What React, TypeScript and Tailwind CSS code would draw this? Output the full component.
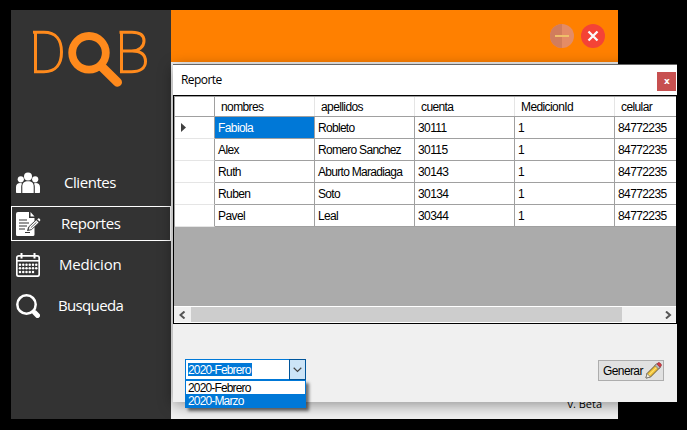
import React from 'react';

const columns = ['nombres', 'apellidos', 'cuenta', 'MedicionId', 'celular'];
const rows = [
  ['Fabiola', 'Robleto', '30111', '1', '84772235'],
  ['Alex', 'Romero Sanchez', '30115', '1', '84772235'],
  ['Ruth', 'Aburto Maradiaga', '30143', '1', '84772235'],
  ['Ruben', 'Soto', '30134', '1', '84772235'],
  ['Pavel', 'Leal', '30344', '1', '84772235'],
];

function Logo() {
  return (
    <svg className="ml-[21px] mt-[19px] block" width="118" height="60" viewBox="32 29 118 60" fill="none" stroke="#ff8a1c">
      <path d="M33 32.300H44C56 32.300 61.500 40 61.500 52S56 71.700 44 71.700H35.500V32" strokeWidth="3" />
      <path d="M119.500 32.300H132C140 32.300 144 35.500 144 41S139 51 131.500 51H122M132 51C141 51 145.500 55 145.500 61.500S140 71.700 131.500 71.700H121.500V32" strokeWidth="3" />
      <circle cx="89" cy="52.800" r="16.800" strokeWidth="7.800" />
      <path d="M101.500 66.500L117.500 82.200" strokeWidth="9" strokeLinecap="round" />
    </svg>
  );
}

function ClientesIcon() {
  return (
    <svg width="24" height="24" viewBox="0 0 24 24" fill="#fff">
      <circle cx="4.800" cy="8.300" r="3.100" />
      <circle cx="19.200" cy="8.300" r="3.100" />
      <path d="M0 21.500V16c0-2.500 1.800-4 4.200-4 .8 0 1.400.2 1.900.5-.6 1-.9 2-.9 3.300v6.200H.6zM24 21.500V16c0-2.500-1.800-4-4.200-4-.8 0-1.400.2-1.900.5.6 1 .9 2 .9 3.300v6.200h4.600z" />
      <circle cx="12" cy="5.500" r="4" />
      <path d="M6.300 22V15.500c0-3.500 2-5.300 5.700-5.300s5.700 1.800 5.700 5.300V22z" />
    </svg>
  );
}

function ReportesIcon() {
  return (
    <svg width="25" height="24" viewBox="0 0 25 24">
      <path d="M2 0H13V6H18.500V9L12 15.500 11 19 15 18 18.500 15V22.500Q18.500 24 17 24H1.500Q0 24 0 22.500V2Q0 0 2 0zM14.500 0L18.500 4.500H14.500z" fill="#fff" />
      <path d="M3 8H11M3 11H13M3 14H11M3 17H9M9 20.500H14" stroke="#333" strokeWidth="1.100" />
      <path d="M13 14.700L20.300 7.900 23 10.500 15.500 17.600 12.300 18.200z" fill="#fff" stroke="#333" strokeWidth=".7" />
      <path d="M21.200 7.200L22.200 6.400Q23 6.100 23.900 7T24.100 8.800L23.500 9.500z" fill="#fff" />
      <path d="M14.800 15.700L20.500 10.300" stroke="#333" strokeWidth=".8" />
    </svg>
  );
}

const calendarRows = [
  { y: 11.7, days: 6 },
  { y: 15.3, days: 6 },
  { y: 18.9, days: 5 },
];

function MedicionIcon() {
  return (
    <svg width="24" height="24" viewBox="0 0 24 24" fill="none" stroke="#fff">
      <rect x=".8" y="2.800" width="22.400" height="20.400" rx="2" strokeWidth="1.700" />
      <path d="M1 7.800H23" strokeWidth="1.600" />
      <path d="M5.500 0V5.500M18.500 0V5.500" strokeWidth="2" />
      {calendarRows.map((r) =>
        Array.from({ length: r.days }, (_, i) => (
          <circle key={`${r.y}-${i}`} cx={4 + i * 3.25} cy={r.y} r="1.250" fill="#fff" stroke="none" />
        )),
      )}
    </svg>
  );
}

function BusquedaIcon() {
  return (
    <svg width="24" height="24" viewBox="0 0 24 24" fill="none" stroke="#fff">
      <circle cx="10.500" cy="10.500" r="9.200" strokeWidth="2.500" />
      <path d="M17 17L18.500 18.500" strokeWidth="2.500" />
      <path d="M18.600 18.600L21.500 21.500" strokeWidth="5" strokeLinecap="round" />
    </svg>
  );
}

const menu = [
  { label: 'Clientes', icon: <ClientesIcon />, text: 'ml-[23px]' },
  { label: 'Reportes', icon: <ReportesIcon />, text: 'ml-[20px]' },
  { label: 'Medicion', icon: <MedicionIcon />, text: 'ml-[18px] tracking-[-0.2px]' },
  { label: 'Busqueda', icon: <BusquedaIcon />, text: 'ml-[17px] tracking-[-0.65px]' },
];

function Sidebar() {
  return (
    <aside className="h-full w-[160px] shrink-0 bg-[#333333]">
      <Logo />
      <nav className="mt-[76px] flex flex-col gap-[6px]">
        {menu.map((m) => (
          <div
            key={m.label}
            className={
              'flex h-[35px] items-center border pl-1 font-["Open_Sans",sans-serif] text-[15px] tracking-[-0.45px] text-white ' +
              (m.label === 'Reportes' ? 'border-white' : 'border-transparent')
            }
          >
            <span className="w-[25px] shrink-0">{m.icon}</span>
            <span className={m.text}>{m.label}</span>
          </div>
        ))}
      </nav>
    </aside>
  );
}

function Grid() {
  return (
    <section className="flex h-[229px] flex-col border border-black bg-[#ababab]">
      <div className="h-[131px] overflow-hidden border-l border-t border-[#a0a0a0]">
        <div className="flex h-5 border-b border-[#a0a0a0] bg-white">
          <div className="w-10 shrink-0 border-r border-[#a0a0a0]" />
          {columns.map((c) => (
            <div key={c} className="w-[100px] shrink-0 border-r border-[#e5e5e5] pl-[6px] leading-[21px]">
              {c}
            </div>
          ))}
        </div>
        {rows.map((r, i) => (
          <div key={r[0]} className="flex h-[22px]">
            <div className="flex w-10 shrink-0 items-center border-b border-r border-b-[#e5e5e5] border-r-[#a0a0a0] bg-white pl-[6px]">
              {i === 0 && (
                <svg width="5" height="9" viewBox="0 0 5 9"><path d="M0 0L5 4.500 0 9z" fill="#404040" /></svg>
              )}
            </div>
            {r.map((v, j) => (
              <div
                key={j}
                className={
                  'w-[100px] shrink-0 whitespace-nowrap border-b border-r border-[#a0a0a0] pl-[3px] leading-[22px] ' +
                  (j === 1 ? 'tracking-[-0.7px] ' : '') +
                  (i === 0 && j === 0 ? 'bg-[#0078d7] text-white' : 'bg-white')
                }
              >
                {v}
              </div>
            ))}
          </div>
        ))}
      </div>
      <div className="mt-auto flex h-[17px] items-center border-y border-white bg-[#f0f0f0]">
        <span className="flex w-[17px] justify-center">
          <svg width="7" height="8" viewBox="0 0 7 8" fill="none"><path d="M5.500 .5L1.500 4 5.500 7.500" stroke="#555" strokeWidth="2" /></svg>
        </span>
        <span className="h-full w-[431px] bg-[#cdcdcd]" />
        <span className="ml-auto mr-[4px]">
          <svg width="7" height="8" viewBox="0 0 7 8" fill="none"><path d="M1 .5L5 4 1 7.500" stroke="#555" strokeWidth="2" /></svg>
        </span>
      </div>
    </section>
  );
}

function MonthSelect() {
  return (
    <div className="relative flex h-[21px] w-[121px] border border-[#0078d7] bg-white tracking-[-0.85px]">
      <span className="ml-[2px] mt-[3px] h-[13px] w-[64px] whitespace-nowrap bg-[#0078d7] leading-[14px] text-white">2020-Febrero</span>
      <span className="-my-px -mr-px ml-auto flex w-[17px] items-center justify-center border border-[#005499] bg-[#cce4f7]">
        <svg width="9" height="6" viewBox="0 0 9 6" fill="none"><path d="M.7 .8L4.500 4.500 8.300 .8" stroke="#444" strokeWidth="1.200" /></svg>
      </span>
      <div className="absolute -left-px top-[20px] w-[121px] border border-[#0078d7] bg-white shadow-[3px_3px_3px_rgba(0,0,0,0.55)]">
        <div className="h-[13px] pl-[2px] leading-[14px]">2020-Febrero</div>
        <div className="h-[13px] bg-[#0078d7] pl-[2px] leading-[14px] text-white">2020-Marzo</div>
      </div>
    </div>
  );
}

function Pencil() {
  return (
    <svg width="17" height="17" viewBox="0 0 17 17">
      <path d="M1 16L2 11.500 11.500 2 15 5.500 5.500 15z" fill="#eabb35" stroke="#65583a" />
      <path d="M4 13L13 4" stroke="#ffe06b" strokeWidth="1.200" />
      <path d="M1 16L2 11.500 5.500 15z" fill="#f5f0df" stroke="#777" strokeWidth=".8" />
      <path d="M10 3.500L12 1.500 15.500 5 13.500 7z" fill="#b9bcc0" stroke="#666" strokeWidth=".7" />
      <path d="M11.800 2L13 .8Q14.200 .2 15.600 1.500T16.200 4L15 5.200z" fill="#d93a43" stroke="#8e3a3d" strokeWidth=".7" />
    </svg>
  );
}

function ReportDialog() {
  return (
    <div className='absolute left-[173px] top-[64px] flex h-[338px] w-[504px] flex-col border-t border-[#666] bg-[#f0f0f0] font-["Liberation_Sans",Arial,sans-serif] text-[12px] tracking-[-0.6px] text-black shadow-[0_3px_14px_rgba(0,0,0,0.4)]'>
      <header className="flex h-[30px] shrink-0 justify-between bg-white">
        <span className='ml-2 mt-px font-["Open_Sans",sans-serif] text-[12px] leading-[28px] tracking-[-0.55px]'>Reporte</span>
        <span className='mr-px mt-[7px] flex h-[19px] w-[19px] items-center justify-center bg-[#c75050] font-["DejaVu_Sans",sans-serif] text-[9px] font-bold leading-none text-white'>x</span>
      </header>
      <Grid />
      <footer className="flex justify-between pl-3 pr-[13px] pt-[35px]">
        <MonthSelect />
        <button className="mt-px flex h-[21px] w-[66px] items-center justify-between border border-[#adadad] bg-[#e1e1e1] pl-1 pr-[1px]">
          Generar
          <Pencil />
        </button>
      </footer>
    </div>
  );
}

export default function App() {
  return (
    <div className="relative h-[430px] w-[687px] overflow-hidden bg-black pl-[11px] pt-[10px]">
      <div className="flex h-[409px] w-[607px] overflow-hidden">
        <Sidebar />
        <main className="flex flex-1 flex-col bg-[#f0f0f0]">
          <header className="flex h-[52px] shrink-0 justify-end gap-[7px] bg-[#ff8000] pr-[13px] pt-[14px]">
            <svg width="24" height="24" viewBox="0 0 24 24">
              <circle cx="12" cy="12" r="12" fill="#e48c66" />
              <path d="M12 0A12 12 0 0 0 12 24z" fill="#d17d5c" />
              <path d="M5 12H19" stroke="#efc06a" strokeWidth="2" />
            </svg>
            <svg width="24" height="24" viewBox="0 0 24 24">
              <circle cx="12" cy="12" r="12" fill="#f44336" />
              <path d="M7.500 7.500L16.500 16.500M16.500 7.500L7.500 16.500" stroke="#fafafa" strokeWidth="2.300" />
            </svg>
          </header>
          <div className='mt-auto pr-4 text-right font-["Open_Sans",sans-serif] text-[11px] leading-[30px] text-black'>v. Beta</div>
        </main>
      </div>
      <ReportDialog />
    </div>
  );
}
